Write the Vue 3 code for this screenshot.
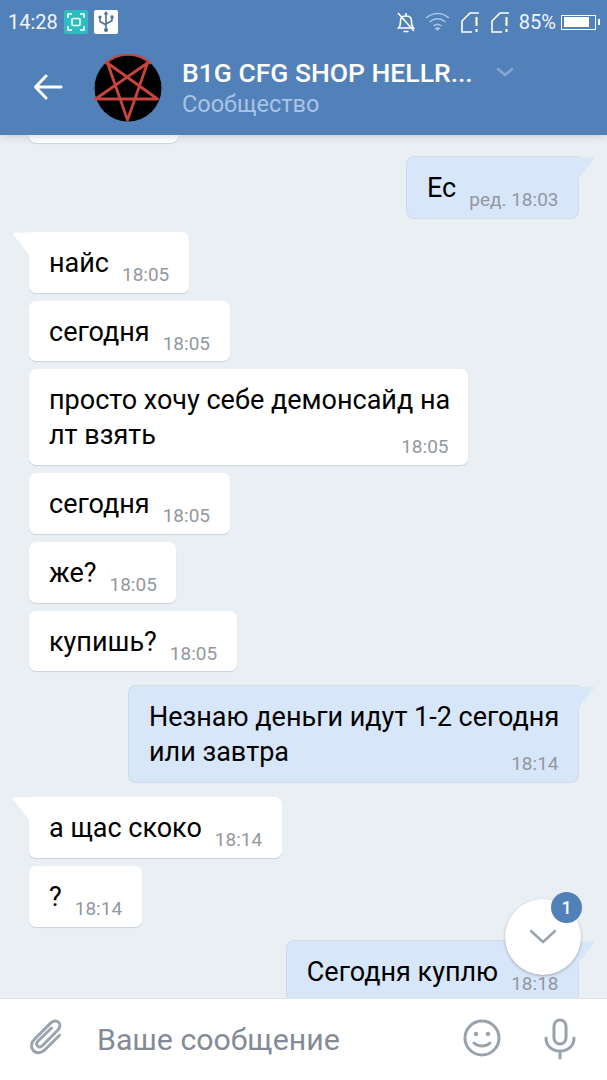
<template>
  <div class="screen">
    <header class="top">
      <div class="status">
        <span class="clock">14:28</span>
        <span class="chip chip-teal">
          <svg width="22" height="22" viewBox="0 0 22 22" fill="none" stroke="#fff" stroke-width="1.6">
            <path d="M3 7V3h4M15 3h4v4M19 15v4h-4M7 19H3v-4" />
            <rect x="7" y="7.5" width="8" height="7" rx="1" />
          </svg>
        </span>
        <span class="chip chip-white">
          <svg width="22" height="24" viewBox="0 0 22 24" fill="none" stroke="#4f7196" stroke-width="1.6">
            <path d="M11 3v17M5 8v3.5l6 3.5M17 8v2.5l-6 3.5" />
            <path d="M11 1l2.4 3.5H8.6z" fill="#4f7196" stroke="none" />
            <circle cx="11" cy="20" r="2" fill="#4f7196" stroke="none" />
            <circle cx="5" cy="7" r="1.6" fill="#4f7196" stroke="none" />
            <rect x="15.5" y="5.5" width="3" height="3" fill="#4f7196" stroke="none" />
          </svg>
        </span>
        <span class="spacer"></span>
        <svg class="bell" width="18" height="22" viewBox="0 0 18 22" fill="none" stroke="#fff" stroke-width="1.6">
          <path d="M1.5 17c2-2 2-4 2-7 0-3 2-5 5.500-5s5.500 2 5.500 5c0 3 0 5 2 7zM6.500 20.500h5M9 2v3M1 2l16 18" />
        </svg>
        <svg class="wifi" width="25" height="22" viewBox="0 0 25 22" fill="none" stroke="#a9c3e6" stroke-width="1.6">
          <path d="M1 7c7-6 16-6 23 0M4.500 11c5-4 11-4 16 0M8.500 15c2.500-2 5.500-2 8 0" />
          <path d="M12.500 20l-3-3c2-1 4-1 6 0z" fill="#a9c3e6" stroke="none" />
        </svg>
        <svg v-for="n in 2" :key="n" class="sim" width="19" height="22" viewBox="0 0 19 22" fill="none" stroke="#fff" stroke-width="1.6">
          <path d="M11 21H1V10L9 2h9" />
          <path d="M15.500 6v9M15.500 18v3" stroke-width="2" />
        </svg>
        <span class="pct">85%</span>
        <span class="battery"><span class="battery-fill"></span></span>
      </div>
      <div class="bar">
        <svg class="back" width="30" height="26" viewBox="0 0 30 26" fill="none" stroke="#fff" stroke-width="3" stroke-linecap="round" stroke-linejoin="round">
          <path d="M28 13H3M13 2L2.500 13 13 24" />
        </svg>
        <svg class="avatar" width="68" height="68" viewBox="0 0 68 68">
          <circle cx="34" cy="34" r="33.5" fill="#000" />
          <path d="M11 10A33 33 0 0 1 57 10" fill="none" stroke="#c8443e" stroke-width="2" />
          <path d="M33.500 66L13.500 9 63.500 45H1.500L53.500 9z" fill="none" stroke="#c8443e" stroke-width="2.800" stroke-linejoin="round" />
        </svg>
        <div class="titles">
          <div class="title-row">
            <span class="title">B1G CFG SHOP HELLR...</span>
            <svg class="chev" width="18" height="10" viewBox="0 0 18 10" fill="none" stroke="#86a7d2" stroke-width="2.6" stroke-linecap="round" stroke-linejoin="round">
              <path d="M2 2l7 6 7-6" />
            </svg>
          </div>
          <div class="sub">Сообщество</div>
        </div>
      </div>
    </header>

    <main class="chat">
      <div class="bubble stub"></div>
      <div v-for="(m, i) in messages" :key="i" class="bubble" :class="[m.out ? 'out' : 'in', { 'has-tail': m.tail, multi: m.lead, first: m.first, wide: m.wide }]">
        <svg v-if="m.tail && !m.out" class="tail tail-in" width="18" height="30" viewBox="0 0 18 30">
          <path d="M18 .5H3C1 .5.800 2 2 3.500L15 20c2 2.500 3 5 3 10z" fill="#fff" />
        </svg>
        <svg v-if="m.tail && m.out" class="tail tail-out" width="18" height="30" viewBox="0 0 18 30">
          <path d="M0 .5h15c2 0 2.200 1.500 1 3L3 20C1 22.500 0 25 0 30z" fill="#d7e6f8" />
        </svg>
        <div v-if="m.lead" class="lead">{{ m.lead }}</div>
        <div class="row">
          <span class="text">{{ m.text }}</span>
          <span class="time">{{ m.time }}</span>
        </div>
      </div>
    </main>

    <button class="fab">
      <svg width="28" height="16" viewBox="0 0 28 16" fill="none" stroke="#99a2ad" stroke-width="2.4" stroke-linecap="round" stroke-linejoin="round">
        <path d="M2 2l12 11L26 2" />
      </svg>
      <span class="fab-badge">1</span>
    </button>

    <footer class="composer">
      <svg class="clip" width="34" height="38" viewBox="0 0 38 40" fill="none" stroke="#99a2ad" stroke-width="3.200" stroke-linecap="round">
        <path d="M33 18L17 34c-4.500 4.500-10 4.500-13 1.500S.5 27 5 22.500L23 4.500c3-3 7-3 9-1s2 6-1 9L14 29.500c-2 2-4 2-5.500.5S7 26.500 9 24.500L24 10" />
      </svg>
      <span class="placeholder">Ваше сообщение</span>
      <svg class="smile" width="38" height="38" viewBox="0 0 38 38" fill="none" stroke="#99a2ad" stroke-width="3" stroke-linecap="round">
        <circle cx="19" cy="19" r="17" />
        <circle cx="13" cy="15" r="2.2" fill="#99a2ad" stroke="none" />
        <circle cx="25" cy="15" r="2.2" fill="#99a2ad" stroke="none" />
        <path d="M11 24c4 4 12 4 16 0" />
      </svg>
      <svg class="mic" width="32" height="42" viewBox="0 0 32 42" fill="none" stroke="#99a2ad" stroke-width="3" stroke-linecap="round">
        <rect x="10" y="2" width="12" height="24" rx="6" />
        <path d="M2 20c0 8 6 13 14 13s14-5 14-13M16 33v7" />
      </svg>
    </footer>
  </div>
</template>

<script setup>
const messages = [
  { text: 'Ес', time: 'ред. 18:03', out: true, tail: true, first: true },
  { text: 'найс', time: '18:05', tail: true, first: true },
  { text: 'сегодня', time: '18:05' },
  { lead: 'просто хочу себе демонсайд на', text: 'лт взять', time: '18:05' },
  { text: 'сегодня', time: '18:05' },
  { text: 'же?', time: '18:05' },
  { text: 'купишь?', time: '18:05' },
  { lead: 'Незнаю деньги идут 1-2 сегодня', text: 'или завтра', time: '18:14', out: true, tail: true, first: true, wide: true },
  { text: 'а щас скоко', time: '18:14', tail: true, first: true, wide: true },
  { text: '?', time: '18:14' },
  { text: 'Сегодня куплю', time: '18:18', out: true, tail: true, first: true },
]
</script>

<style>
html, body { margin: 0; background: #eaeff4; }
</style>

<style scoped>
.screen {
  position: relative; width: 607px; height: 1080px; overflow: hidden;
  display: flex; flex-direction: column; background: #eaeff4;
  font-family: Roboto, "Liberation Sans", sans-serif;
}
.top {
  flex: none; height: 135px; background: #5181b8; color: #fff;
  position: relative; z-index: 2; box-shadow: 0 1px 8px rgba(60, 70, 90, .22);
}
.status { height: 44px; display: flex; align-items: center; padding: 0 7px 0 8px; }
.clock { font-size: 20px; margin-right: 6px; color: #f1f5fa; }
.chip { width: 24px; height: 24px; border-radius: 2px; display: flex; align-items: center; justify-content: center; margin-right: 6px; }
.chip-teal { background: #2bbdc0; }
.chip-white { background: #fff; }
.spacer { flex: 1; }
.wifi { margin-left: 10px; }
.sim { margin-left: 11px; }
.pct { font-size: 20px; margin-left: 9px; color: #f1f5fa; }
.battery {
  width: 35px; height: 15px; margin: 0 4px 0 5px; border: 1.5px solid #fff; box-sizing: border-box;
  display: flex; padding: 1.5px; position: relative;
}
.battery::after { content: ''; position: absolute; right: -5px; top: 3px; width: 2px; height: 6px; background: #fff; }
.battery-fill { width: 85%; background: #fff; }
.bar { height: 91px; display: flex; align-items: flex-start; }
.back { margin: 30px 0 0 33px; }
.avatar { margin: 10px 0 0 31px; }
.titles { margin-left: 20px; }
.title-row { display: flex; align-items: center; margin-top: 12px; height: 32px; }
.title { font-size: 26.5px; font-weight: 500; white-space: nowrap; }
.chev { margin-left: 23px; }
.sub { font-size: 23.5px; color: #a9c3e6; margin-top: 1px; line-height: 30px; }
.chat {
  flex: 1; min-height: 0; overflow: hidden; display: flex; flex-direction: column;
  align-items: flex-start; gap: 8px; padding: 0 29px;
}
.bubble {
  position: relative; flex: none; box-sizing: border-box; border-radius: 7px;
  padding: 14px 19.5px 11.75px 20px; font-size: 27px; line-height: 35px; color: #000;
  box-shadow: 0 1px 1px rgba(90, 110, 140, .22);
}
.in { background: #fff; }
.out { background: #d7e6f8; align-self: flex-end; box-shadow: 0 0 0 1px rgba(140, 170, 205, .28); }
.stub { width: 149px; height: 8px; background: #fff; border-radius: 0 0 7px 7px; padding: 0; }
.first { margin-top: 6px; }
.wide { margin-top: 7px; }
.in.has-tail { border-top-left-radius: 0; }
.out.has-tail { border-top-right-radius: 0; }
.tail { position: absolute; top: 0; }
.tail-in { left: -17px; }
.tail-out { right: -17px; }
.lead { white-space: nowrap; }
.row { display: flex; align-items: flex-end; justify-content: space-between; gap: 13px; }
.multi { width: 439px; }
.out.multi { width: 449px; }
.time { font-size: 19px; line-height: 24px; color: #93989f; white-space: nowrap; margin-bottom: -6px; }
.fab {
  position: absolute; left: 505px; top: 899px; width: 76px; height: 76px; padding: 0; border: 0;
  border-radius: 50%; background: #fff; box-shadow: 0 1px 3px rgba(0, 0, 0, .28); z-index: 3;
  display: flex; align-items: center; justify-content: center;
}
.fab-badge {
  position: absolute; left: 46px; top: -7px; width: 31px; height: 31px; border-radius: 50%;
  background: #5181b8; color: #fff; font: 500 18px/31px Roboto, sans-serif; text-align: center;
}
.composer {
  flex: none; height: 82px; background: #fff; border-top: 1px solid #dfe3e8; box-sizing: border-box;
  display: flex; align-items: center; position: relative; z-index: 1;
}
.clip { margin: 0 0 6px 30px; }
.placeholder { font-size: 30.3px; color: #828b96; margin-left: 33px; flex: 1; }
.smile { margin-right: 43px; margin-bottom: 4px; }
.mic { margin-right: 31px; margin-bottom: 2px; }
</style>
